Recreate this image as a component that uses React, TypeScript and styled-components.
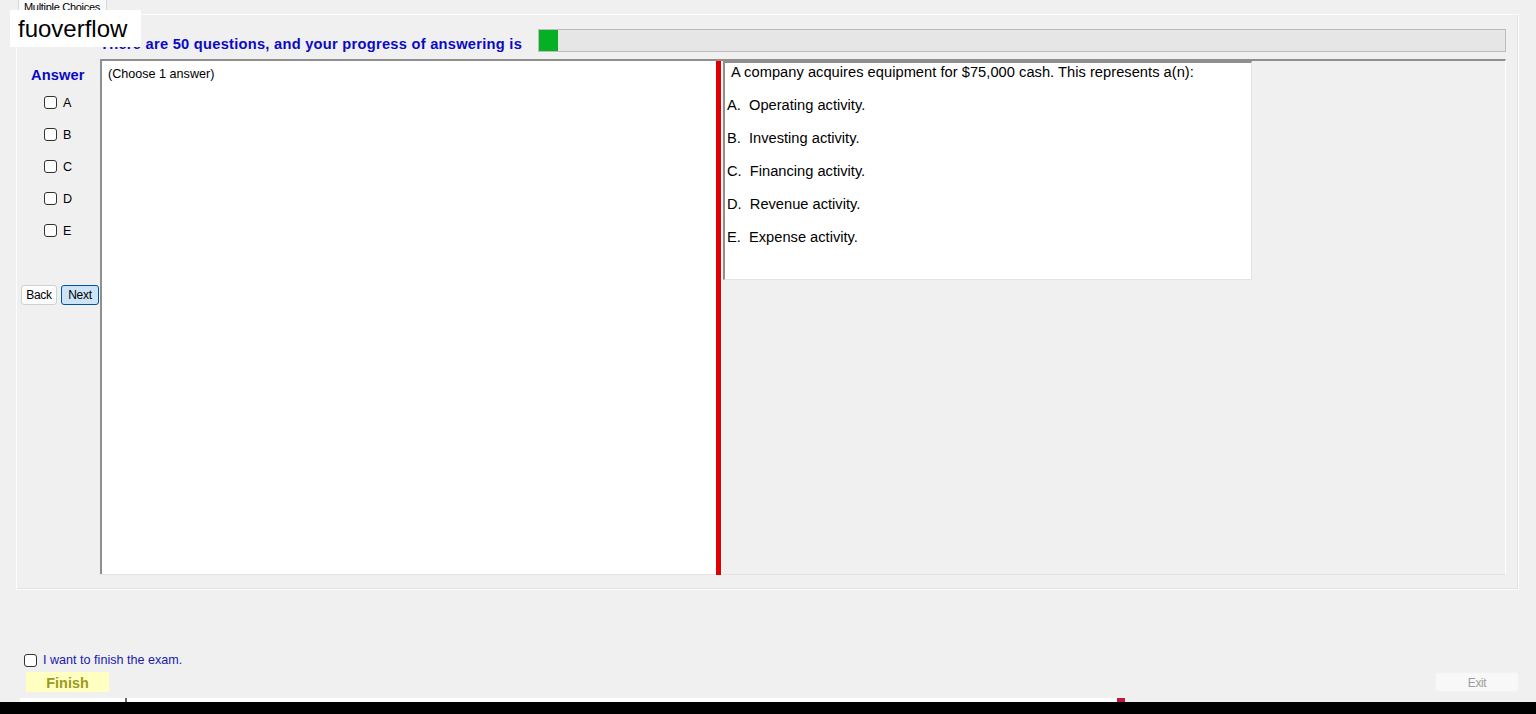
import React from "react";
import styled, { createGlobalStyle } from "styled-components";

const Global = createGlobalStyle`
  html, body { margin: 0; padding: 0; background: #f0f0f0; overflow: hidden; }
  body { font-family: "Liberation Sans", Arial, sans-serif; }
  * { box-sizing: border-box; }
`;

const Page = styled.div`
  position: relative;
  width: 1536px;
  height: 714px;
  display: flex;
  flex-direction: column;
  background: #f0f0f0;
`;

const Watermark = styled.div`
  position: absolute;
  left: 10px;
  top: 10px;
  width: 131px;
  height: 37px;
  background: #ffffff;
  color: #000;
  font-size: 24px;
  line-height: 37px;
  padding-left: 8px;
  z-index: 5;
`;

const TabStrip = styled.div`
  height: 14px;
  padding-left: 18px;
  display: flex;
`;

const Tab = styled.div`
  width: 89px;
  height: 15px;
  background: #f9f9f9;
  border: 1px solid #d9d9d9;
  border-bottom: none;
  font-size: 11px;
  line-height: 13px;
  padding-left: 5px;
  letter-spacing: -0.3px;
  color: #000;
  margin-top: -2px;
  padding-top: 2px;
`;

const TabPanel = styled.div`
  margin: 0 17px 0 16px;
  height: 576px;
  border: 1px solid #fcfcfc;
  box-shadow: inset -1px -1px 0 #e2e2e2;
  padding: 14px 12px 14px 3px;
  display: grid;
  grid-template-columns: 80px 1fr;
  grid-template-rows: 23px 1fr;
  row-gap: 7px;
`;

const HeadingRow = styled.div`
  grid-column: 2;
  display: flex;
  align-items: center;
  gap: 16px;
`;

const Heading = styled.div`
  color: #0a0ac4;
  font-weight: bold;
  font-size: 14.67px;
  letter-spacing: 0.26px;
  white-space: nowrap;
  padding-top: 7px;
`;

const Progress = styled.div`
  flex: 1;
  height: 23px;
  background: #e6e6e6;
  border: 1px solid #bcbcbc;
  display: flex;
`;

const ProgressFill = styled.div`
  background: #06b025;
  height: 100%;
`;

const AnswerCol = styled.div`
  grid-column: 1;
  grid-row: 2;
  display: flex;
  flex-direction: column;
`;

const AnswerTitle = styled.div`
  color: #0a0ac4;
  font-weight: bold;
  font-size: 14.67px;
  letter-spacing: 0.1px;
  padding-left: 11px;
  margin-top: 8px;
  height: 16px;
  line-height: 16px;
`;

const ChoiceList = styled.div`
  display: flex;
  flex-direction: column;
  gap: 19px;
  padding-left: 24px;
  margin-top: 13px;
`;

const ChoiceRow = styled.label`
  display: flex;
  align-items: center;
  gap: 6px;
  font-size: 12.6px;
  height: 13px;
  color: #000;
`;

const Box = styled.span`
  width: 13px;
  height: 13px;
  border: 1px solid #333;
  border-radius: 3px;
  background: #fff;
  display: inline-block;
  flex: none;
`;

const NavRow = styled.div`
  display: flex;
  gap: 4px;
  padding-left: 1px;
  margin-top: 48px;
`;

const NavButton = styled.button<{ $primary?: boolean }>`
  height: 20px;
  width: ${(p) => (p.$primary ? "38px" : "36px")};
  padding: 0;
  font-family: "Liberation Sans", Arial, sans-serif;
  font-size: 12px;
  letter-spacing: -0.3px;
  color: #000;
  border-radius: 3px;
  background: ${(p) => (p.$primary ? "#cce4f7" : "#fdfdfd")};
  border: 1px solid ${(p) => (p.$primary ? "#005499" : "#d0d0d0")};
`;

const Main = styled.div`
  grid-column: 2;
  grid-row: 2;
  display: flex;
  border-top: 2px solid #8f8f8f;
  border-bottom: 1px solid #e3e3e3;
  border-right: 1px solid #fdfdfd;
`;

const LeftPane = styled.div`
  width: 616px;
  background: #fff;
  border-left: 2px solid #8f8f8f;
  font-size: 12.6px;
  padding: 6px 6px;
  color: #000;
`;

const Splitter = styled.div`
  width: 5px;
  background: #e10000;
  margin-bottom: -1px;
  flex: none;
`;

const RightPane = styled.div`
  flex: 1;
  background: #f0f0f0;
  padding: 0 0 0 1px;
  border-left: 1px solid #fdfdfd;
`;

const QuestionBox = styled.div`
  width: 529px;
  height: 219px;
  background: #fff;
  border-top: 2px solid #8f8f8f;
  border-left: 2px solid #8f8f8f;
  border-right: 1px solid #e3e3e3;
  border-bottom: 1px solid #e3e3e3;
  font-size: 14.67px;
  color: #000;
  padding-left: 2px;
`;

const Stem = styled.div`
  padding-left: 4px;
  height: 20px;
  line-height: 18px;
  letter-spacing: 0.03px;
`;

const Option = styled.div`
  height: 33px;
  line-height: 18px;
  padding-top: 13px;
  white-space: pre;
`;

const Footer = styled.div`
  flex: 1;
  display: flex;
  flex-direction: column;
  padding: 62px 17px 0 24px;
`;

const FinishCheck = styled.label`
  display: flex;
  align-items: center;
  gap: 6px;
  font-size: 12.6px;
  color: #1a18b0;
  height: 16px;
`;

const FooterRow = styled.div`
  display: flex;
  justify-content: space-between;
  margin-top: 4px;
`;

const FinishButton = styled.button`
  margin-left: 2px;
  width: 83px;
  height: 20px;
  background: #ffffc2;
  border: none;
  color: #9a9a1e;
  font-family: "Liberation Sans", Arial, sans-serif;
  font-weight: bold;
  font-size: 14.4px;
  padding: 2px 0 0 0;
`;

const ExitButton = styled.button`
  width: 84px;
  height: 20px;
  background: #f8f8f8;
  border: 1px solid #f2f2f2;
  border-radius: 3px;
  color: #9d9d9d;
  font-family: "Liberation Sans", Arial, sans-serif;
  font-size: 12px;
  letter-spacing: -0.4px;
  padding: 1px 0 0 0;
`;

const StatusStrip = styled.div`
  height: 4px;
  display: flex;
  padding-left: 20px;
  margin-top: 5px;
`;

const StripWhite = styled.div`
  width: 1097px;
  background: #fff;
  position: relative;
`;

const StripTick = styled.div`
  position: absolute;
  left: 105px;
  top: 0;
  width: 2px;
  height: 4px;
  background: #666;
`;

const StripMark = styled.div`
  width: 8px;
  background: #c0173c;
`;

const BlackBar = styled.div`
  height: 12px;
  background: #000;
`;

const choices = ["A", "B", "C", "D", "E"];
const options = [
  "A.  Operating activity.",
  "B.  Investing activity.",
  "C.  Financing activity.",
  "D.  Revenue activity.",
  "E.  Expense activity.",
];

export default function App() {
  const progress = 2;
  return (
    <Page>
      <Global />
      <Watermark>fuoverflow</Watermark>
      <TabStrip>
        <Tab>Multiple Choices</Tab>
      </TabStrip>
      <TabPanel>
        <HeadingRow>
          <Heading>There are 50 questions, and your progress of answering is</Heading>
          <Progress>
            <ProgressFill style={{ width: `${progress}%` }} />
          </Progress>
        </HeadingRow>
        <AnswerCol>
          <AnswerTitle>Answer</AnswerTitle>
          <ChoiceList>
            {choices.map((c) => (
              <ChoiceRow key={c}>
                <Box />
                {c}
              </ChoiceRow>
            ))}
          </ChoiceList>
          <NavRow>
            <NavButton>Back</NavButton>
            <NavButton $primary>Next</NavButton>
          </NavRow>
        </AnswerCol>
        <Main>
          <LeftPane>(Choose 1 answer)</LeftPane>
          <Splitter />
          <RightPane>
            <QuestionBox>
              <Stem>A company acquires equipment for $75,000 cash. This represents a(n):</Stem>
              {options.map((o) => (
                <Option key={o}>{o}</Option>
              ))}
            </QuestionBox>
          </RightPane>
        </Main>
      </TabPanel>
      <Footer>
        <FinishCheck>
          <Box />I want to finish the exam.
        </FinishCheck>
        <FooterRow>
          <FinishButton>Finish</FinishButton>
          <ExitButton>Exit</ExitButton>
        </FooterRow>
      </Footer>
      <StatusStrip>
        <StripWhite>
          <StripTick />
        </StripWhite>
        <StripMark />
      </StatusStrip>
      <BlackBar />
    </Page>
  );
}
